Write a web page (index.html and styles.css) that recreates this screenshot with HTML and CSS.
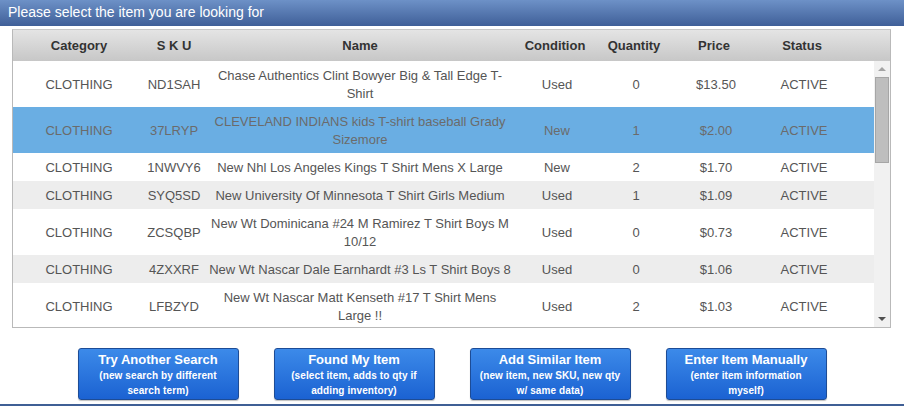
FILE: index.html
```html
<!DOCTYPE html>
<html>
<head>
<meta charset="utf-8">
<link rel="stylesheet" href="styles.css">
</head>
<body>
<div class="titlebar">Please select the item you are looking for</div>
<div class="grid">
  <table class="thead">
    <colgroup><col class="c1"><col class="c2"><col class="c3"><col class="c4"><col class="c5"><col class="c6"><col class="c7"><col></colgroup>
    <tr><th>Category</th><th>S K U</th><th>Name</th><th>Condition</th><th>Quantity</th><th>Price</th><th>Status</th><th></th></tr>
  </table>
  <div class="bodywrap">
    <div class="bodyclip">
      <table class="tbody">
        <colgroup><col class="c1"><col class="c2"><col class="c3"><col class="c4"><col class="c5"><col class="c6"><col class="c7"><col></colgroup>
        <tr><td>CLOTHING</td><td>ND1SAH</td><td>Chase Authentics Clint Bowyer Big &amp; Tall Edge T-Shirt</td><td>Used</td><td>0</td><td>$13.50</td><td>ACTIVE</td><td></td></tr>
        <tr class="sel"><td>CLOTHING</td><td>37LRYP</td><td>CLEVELAND INDIANS kids T-shirt baseball Grady Sizemore</td><td>New</td><td>1</td><td>$2.00</td><td>ACTIVE</td><td></td></tr>
        <tr><td>CLOTHING</td><td>1NWVY6</td><td>New Nhl Los Angeles Kings T Shirt Mens X Large</td><td>New</td><td>2</td><td>$1.70</td><td>ACTIVE</td><td></td></tr>
        <tr class="alt"><td>CLOTHING</td><td>SYQ5SD</td><td>New University Of Minnesota T Shirt Girls Medium</td><td>Used</td><td>1</td><td>$1.09</td><td>ACTIVE</td><td></td></tr>
        <tr><td>CLOTHING</td><td>ZCSQBP</td><td>New Wt Dominicana #24 M Ramirez T Shirt Boys M 10/12</td><td>Used</td><td>0</td><td>$0.73</td><td>ACTIVE</td><td></td></tr>
        <tr class="alt"><td>CLOTHING</td><td>4ZXXRF</td><td>New Wt Nascar Dale Earnhardt #3 Ls T Shirt Boys 8</td><td>Used</td><td>0</td><td>$1.06</td><td>ACTIVE</td><td></td></tr>
        <tr><td>CLOTHING</td><td>LFBZYD</td><td>New Wt Nascar Matt Kenseth #17 T Shirt Mens Large !!</td><td>Used</td><td>2</td><td>$1.03</td><td>ACTIVE</td><td></td></tr>
      </table>
    </div>
    <div class="scrollbar">
      <div class="arrow up"></div>
      <div class="track"><div class="thumb"></div></div>
      <div class="arrow down"></div>
    </div>
  </div>
</div>
<div class="buttons">
  <button class="btn"><span class="t">Try Another Search</span><span class="s">(new search by different search term)</span></button>
  <button class="btn"><span class="t">Found My Item</span><span class="s">(select item, adds to qty if adding inventory)</span></button>
  <button class="btn"><span class="t">Add Similar Item</span><span class="s">(new item, new SKU, new qty w/ same data)</span></button>
  <button class="btn"><span class="t">Enter Item Manually</span><span class="s">(enter item information myself)</span></button>
</div>
<div class="bottomline"></div>
</body>
</html>
```
FILE: styles.css
```css
html, body { margin: 0; padding: 0; background: #fff; }
body { font-family: "Liberation Sans", Arial, sans-serif; width: 904px; height: 406px; overflow: hidden; position: relative; }
.titlebar {
  height: 26px; line-height: 25px; box-sizing: border-box;
  padding-left: 8px; color: #fff; font-size: 14px;
  background: linear-gradient(#6d91c7, #3f5f98);
}
.grid {
  margin: 3px 0 0 12px; width: 879px; box-sizing: border-box;
  border: 1px solid #b9b9b9; border-top-color: #c8c8c8;
}
table { border-collapse: collapse; table-layout: fixed; }
.thead { width: 877px; background: linear-gradient(#e4e4e4, #c7c7c7); }
.thead th { height: 31px; padding: 0; font-size: 13px; font-weight: bold; color: #333; text-align: center; }
.thead th:nth-child(n+4) { position: relative; left: -2px; }
.c1 { width: 132px; } .c2 { width: 58px; } .c3 { width: 314px; } .c4 { width: 80px; }
.c5 { width: 78px; } .c6 { width: 82px; } .c7 { width: 94px; }
.bodywrap { display: flex; height: 266px; }
.bodyclip { width: 861px; height: 266px; overflow: hidden; }
.tbody { width: 861px; }
.tbody td { padding: 6px 4px 4px; font-size: 13px; line-height: 18px; color: #555; text-align: center; vertical-align: middle; }
.tbody td:nth-child(2) { padding-left: 1px; padding-right: 1px; }
.tbody tr.alt { background: #ededed; }
.tbody tr.sel { background: #6aaee3; }
.tbody tr.sel td { color: #6b6b6b; }
.scrollbar { width: 16px; background: #f1f1f1; display: flex; flex-direction: column; }
.arrow { height: 15px; position: relative; }
.arrow::after { content: ""; position: absolute; left: 4px; border-left: 4px solid transparent; border-right: 4px solid transparent; }
.arrow.up::after { top: 6px; border-bottom: 4px solid #a3a3a3; }
.arrow.down::after { top: 5px; border-top: 4px solid #505050; }
.track { flex: 1; padding-top: 1px; }
.thumb { margin: 0 1px; height: 86px; box-sizing: border-box; background: #bebebe; border: 1px solid #a6a6a6; }
.buttons { display: flex; justify-content: center; gap: 35px; margin-top: 20px; }
.btn {
  width: 161px; height: 52px; box-sizing: border-box; padding: 2px 0 0; margin: 0;
  border: 1px solid #1d4c96; border-radius: 3px;
  background: linear-gradient(#3c8ae9, #1b62d2);
  color: #fff; font-family: "Liberation Sans", Arial, sans-serif; font-weight: bold;
  display: flex; flex-direction: column; align-items: center; justify-content: flex-start;
  box-shadow: 0 1px 1px rgba(0,0,0,0.25);
}
.btn .t { font-size: 13px; line-height: 17px; }
.btn .s { font-size: 10px; line-height: 15px; padding: 0 6px; letter-spacing: 0.1px; }
.bottomline { position: absolute; left: 0; right: 0; bottom: 0; height: 2px; background: #3f5f95; }
```
